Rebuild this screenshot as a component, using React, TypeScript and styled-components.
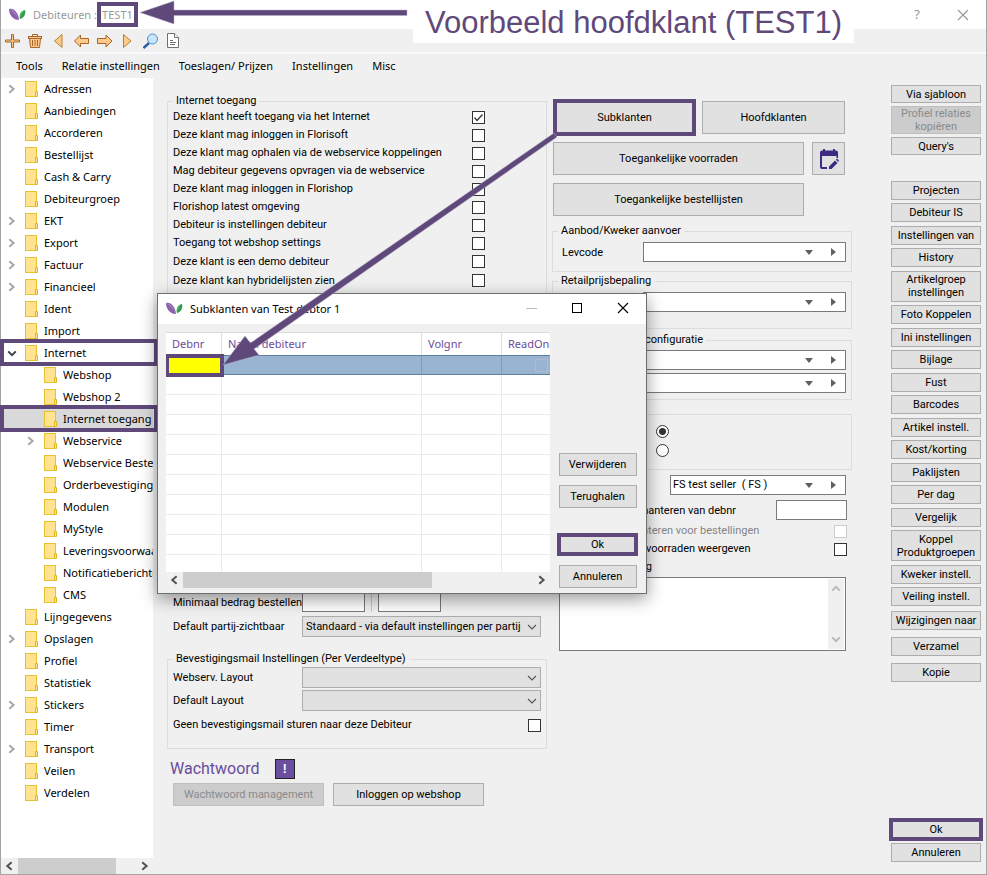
import React from 'react';
import styled, { createGlobalStyle, css } from 'styled-components';

const PURPLE = '#5f497a';
const UI = '"Noto Sans", "Open Sans", sans-serif';
const FORM = 'Roboto, "Liberation Sans", sans-serif';

const GlobalStyle = createGlobalStyle`
  *, *::before, *::after { box-sizing: border-box; }
  body { margin: 0; background: #fff; }
  button, input, select, textarea { font: inherit; color: inherit; margin: 0; }
`;

const Window = styled.div`
  position: relative;
  display: flex;
  flex-direction: column;
  min-height: 100vh;
  background: #f0f0f0;
  border: 1px solid #a3a3a3;
  border-top: 0;
  font: 11px/14px ${FORM};
  color: #000;
`;

const TitleBar = styled.header`
  display: flex;
  align-items: center;
  height: 29px;
  padding-left: 8px;
  background: #fff;
  font: 11px/15px ${UI};
  color: #999;
`;

const TitleText = styled.h1`
  display: flex;
  align-items: center;
  flex: 1;
  margin: 0 0 0 7px;
  font: inherit;
`;

const Marked = styled.span`
  display: grid;
  place-items: center;
  width: 41px;
  height: 25px;
  border: 4px solid ${PURPLE};
`;

const CaptionButton = styled.button<{ $dark?: boolean }>`
  display: grid;
  place-items: center;
  width: 46px;
  height: 28px;
  padding: 0;
  border: 0;
  background: none;
  font-size: 13px;
  color: ${(p) => (p.$dark ? '#000' : '#999')};
`;

const Toolbar = styled.div`
  display: flex;
  height: 25px;
  border-bottom: 2px solid #fafbfd;
`;

const ToolButton = styled.button`
  display: grid;
  place-items: center;
  width: 23px;
  padding: 0;
  border: 0;
  background: none;
`;

const MenuBar = styled.nav`
  display: flex;
  gap: 9px;
  height: 24px;
  padding-left: 10px;
  font: 11px/24px ${UI};
`;

const MenuItem = styled.button`
  padding: 0 5px;
  border: 0;
  background: none;
`;

const Body = styled.div`
  display: flex;
  flex: 1;
`;

const TreePane = styled.aside`
  display: flex;
  flex-direction: column;
  flex: none;
  width: 152px;
  background: #fff;
  font: 11px/22px ${UI};
`;

const TreeList = styled.ul`
  flex: 1;
  margin: 0;
  padding: 0;
  list-style: none;
`;

const TreeRow = styled.li<{ $sub?: boolean; $marked?: boolean; $selected?: boolean }>`
  position: relative;
  display: flex;
  align-items: center;
  height: 22px;
  padding-left: ${(p) => (p.$sub ? 24 : 5)}px;
  background: ${(p) => (p.$selected ? '#d9d9d9' : 'none')};
  ${(p) =>
    p.$marked &&
    css`
      &::after {
        content: '';
        position: absolute;
        inset: -3px -5px -2px -1px;
        border: 4px solid ${PURPLE};
      }
    `}
`;

const Expander = styled.span`
  display: flex;
  flex: none;
  width: 19px;
`;

const TreeLabel = styled.span`
  flex: 1;
  margin-left: 6px;
  overflow: hidden;
  white-space: nowrap;
`;

const ScrollBar = styled.div`
  display: flex;
  flex: none;
  align-items: stretch;
  height: 16px;
  background: #f0f0f0;
`;

const ScrollButton = styled.button`
  display: grid;
  place-items: center;
  flex: none;
  width: 17px;
  padding: 0;
  border: 0;
  background: none;
`;

const ScrollTrack = styled.div`
  flex: 1;
`;

const ScrollThumb = styled.div<{ $share: number }>`
  width: ${(p) => p.$share}%;
  height: 100%;
  background: #cdcdcd;
`;

const Main = styled.main`
  display: flex;
  flex: 1;
  gap: 5px;
  padding: 7px 5px 12px 14px;
`;

const LeftColumn = styled.div`
  flex: 0 1 380px;
  min-width: 0;
  padding-top: 9px;
`;

const RightColumn = styled.div`
  flex: 0 1 300px;
  min-width: 0;
  padding-top: 14px;
`;

const Group = styled.fieldset<{ $height?: number; $top?: number; $after?: number }>`
  min-width: 0;
  min-height: ${(p) => p.$height ?? 0}px;
  margin: 0 0 ${(p) => p.$after ?? 0}px;
  padding: ${(p) => p.$top ?? 0}px 5px 0;
  border: 1px solid #dcdcdc;
`;

const Legend = styled.legend<{ $indent?: number }>`
  margin-left: ${(p) => p.$indent ?? 0}px;
  padding: 0 3px;
`;

const CheckRow = styled.label<{ $height?: number; $start?: number; $end?: number; $disabled?: boolean }>`
  display: flex;
  align-items: center;
  justify-content: space-between;
  height: ${(p) => p.$height ?? 18}px;
  line-height: 16px;
  padding-left: ${(p) => p.$start ?? 0}px;
  padding-right: ${(p) => p.$end ?? 0}px;
  color: ${(p) => (p.$disabled ? '#848484' : 'inherit')};
`;

const CheckBox = styled.input.attrs({ type: 'checkbox' })`
  appearance: none;
  flex: none;
  width: 13px;
  height: 13px;
  border: 1px solid #333;
  background: #fff;
  &:disabled { border-color: #ccc; }
  &:checked {
    background: #fff url("data:image/svg+xml,%3Csvg xmlns='http://www.w3.org/2000/svg' width='11' height='11'%3E%3Cpath d='M1.5 5.5 4 8.5 9.5 2.5' fill='none' stroke='%23333' stroke-width='1.3'/%3E%3C/svg%3E") center no-repeat;
  }
`;

const Radio = styled.input.attrs({ type: 'radio' })`
  appearance: none;
  width: 13px;
  height: 13px;
  border: 1px solid #333;
  border-radius: 50%;
  background: #fff;
  &:checked { background: radial-gradient(circle, #333 3px, #fff 4px); }
`;

const RadioStack = styled.div`
  display: flex;
  flex-direction: column;
  gap: 6px;
  padding: 10px 0 0 98px;
`;

const Field = styled.div<{ $height?: number; $after?: number; $start?: number; $end?: number }>`
  display: flex;
  align-items: center;
  height: ${(p) => p.$height ?? 21}px;
  margin-bottom: ${(p) => p.$after ?? 0}px;
  padding-left: ${(p) => p.$start ?? 0}px;
  padding-right: ${(p) => p.$end ?? 0}px;
`;

const SplitField = styled(Field)`
  justify-content: space-between;
`;

const FieldLabel = styled.label<{ $width: number; $right?: boolean }>`
  flex: none;
  width: ${(p) => p.$width}px;
  padding-top: 1px;
  text-align: ${(p) => (p.$right ? 'right' : 'left')};
  white-space: nowrap;
`;

const TextBox = styled.input<{ $width: number }>`
  width: ${(p) => p.$width}px;
  height: 20px;
  padding: 0 3px;
  border: 1px solid #7a7a7a;
  background: #fff;
`;

const Divider = styled.span`
  width: 1px;
  height: 20px;
  margin: 0 6px;
  background: #c8c8c8;
`;

const DropDown = styled.select`
  appearance: none;
  flex: 1;
  min-width: 0;
  height: 21px;
  padding: 0 16px 0 3px;
  border: 1px solid #adadad;
  border-radius: 0;
  background: #e1e1e1 url("data:image/svg+xml,%3Csvg xmlns='http://www.w3.org/2000/svg' width='10' height='6'%3E%3Cpath d='M1 1 5 5 9 1' fill='none' stroke='%23555' stroke-width='1.1'/%3E%3C/svg%3E") right 3px center no-repeat;
`;

const ComboBox = styled.div`
  display: flex;
  flex: 1;
  height: 20px;
  border: 1px solid #7a7a7a;
  background: #fff;
`;

const ComboSelect = styled.select`
  appearance: none;
  flex: 1;
  min-width: 0;
  padding: 0 20px 0 2px;
  border: 0;
  white-space: pre;
  background: url("data:image/svg+xml,%3Csvg xmlns='http://www.w3.org/2000/svg' width='8' height='5'%3E%3Cpath d='M0 0H8L4 5Z' fill='%23606060'/%3E%3C/svg%3E") right 8px center no-repeat;
`;

const ComboNext = styled.button`
  display: grid;
  place-items: center;
  width: 24px;
  padding: 0;
  border: 0;
  background: none;
`;

const Button = styled.button<{ $width?: number; $height?: number; $marked?: boolean }>`
  display: grid;
  place-items: center;
  flex: none;
  width: ${(p) => (p.$width ? `${p.$width}px` : '100%')};
  height: ${(p) => p.$height ?? 33}px;
  padding: 0;
  border: 1px solid #adadad;
  background: #e1e1e1;
  font: 11px/13px ${FORM};
  color: #000;
  white-space: pre;
  &:disabled { background: #ccc; border-color: #bfbfbf; color: #8a8a8a; }
  ${(p) => p.$marked && css`border: 4px solid ${PURPLE};`}
`;

const ButtonStack = styled.div`
  margin-bottom: 8px;
  padding-left: 1px;
`;

const ButtonRow = styled.div<{ $gap?: number; $indent?: number; $after?: number }>`
  display: flex;
  align-items: center;
  gap: ${(p) => p.$gap ?? 0}px;
  margin-bottom: ${(p) => p.$after ?? 0}px;
  padding-left: ${(p) => p.$indent ?? 0}px;
`;

const Section = styled.h2`
  display: flex;
  align-items: center;
  gap: 15px;
  margin: 10px 0 4px 3px;
  font: 16px/20px ${FORM};
  color: #6a4c9c;
`;

const Alert = styled.span`
  display: grid;
  place-items: center;
  width: 20px;
  height: 20px;
  border: 1px solid #222;
  background: #6b4f9e;
  font: bold 12px/18px "Liberation Sans", sans-serif;
  color: #fff;
`;

const NoteBox = styled.div`
  display: flex;
  height: 74px;
  margin: 2px 6px 0 7px;
  padding: 1px;
  border: 1px solid #7a7a7a;
  background: #fff;
`;

const NoteText = styled.textarea`
  flex: 1;
  min-width: 0;
  padding: 0;
  border: 0;
  resize: none;
`;

const NoteScroll = styled.div`
  display: flex;
  flex-direction: column;
  justify-content: space-between;
  align-items: center;
  width: 16px;
  padding: 4px 0;
  background: #f0f0f0;
`;

const Sidebar = styled.div`
  display: flex;
  flex-direction: column;
  flex: none;
  width: 90px;
  margin-left: auto;
`;

const TopActions = styled.div`
  display: grid;
  gap: 3px;
  margin-bottom: 26px;
`;

const EvenActions = styled.div`
  display: flex;
  flex-direction: column;
  justify-content: space-between;
  min-height: 425px;
  margin-bottom: 5px;
`;

const WideActions = styled.div`
  display: grid;
  gap: 7px;
`;

const CloseActions = styled.div`
  display: grid;
  justify-items: center;
  gap: 2px;
  margin: auto -2px 0;
`;

const Dialog = styled.section`
  position: absolute;
  left: 156px;
  top: 293px;
  width: 490px;
  border: 1px solid #6e6e6e;
  background: #f0f0f0;
  box-shadow: 0 5px 16px rgba(0, 0, 0, 0.4);
`;

const DialogBar = styled.header`
  display: flex;
  align-items: center;
  height: 30px;
  padding: 0 0 2px 8px;
  background: #fff;
  font: 11px/15px ${UI};
`;

const DialogTitle = styled.h2`
  flex: 1;
  margin: 0 0 0 7px;
  font: inherit;
`;

const DialogBody = styled.div`
  display: flex;
  gap: 8px;
  padding: 8px 9px 5px 8px;
`;

const GridPane = styled.div`
  flex: 1;
  min-width: 0;
`;

const GridClip = styled.div`
  height: 240px;
  overflow: hidden;
`;

const Grid = styled.table`
  width: 405px;
  table-layout: fixed;
  border-collapse: separate;
  border-spacing: 0;
  background: #fff;
  font: 11px/15px ${UI};
`;

const HeadCell = styled.th<{ $width: number }>`
  width: ${(p) => p.$width}px;
  height: 23px;
  padding: 0 6px 1px;
  border-top: 1px solid #dcdcdc;
  border-right: 1px solid #dcdcdc;
  text-align: left;
  font-weight: normal;
  color: #6a4c9c;
  white-space: nowrap;
`;

const Cell = styled.td<{ $active?: boolean; $marked?: boolean }>`
  height: 20px;
  padding: 0;
  border-right: 1px solid ${(p) => (p.$active ? '#7f9ebf' : '#ebebeb')};
  border-bottom: 1px solid ${(p) => (p.$active ? '#5f7f9f' : '#ebebeb')};
  ${(p) => p.$active && css`background: #99b4d1; border-top: 1px solid #5f7f9f;`}
  ${(p) =>
    p.$marked &&
    css`
      position: relative;
      background: #ff0;
      &::after {
        content: '';
        position: absolute;
        inset: -2px -3px -3px -1px;
        border: 4px solid ${PURPLE};
      }
    `}
`;

const GhostCheck = styled.input.attrs({ type: 'checkbox' })`
  appearance: none;
  display: block;
  width: 13px;
  height: 13px;
  margin-left: 33px;
  border: 1px solid #b5bcc8;
`;

const DialogActions = styled.div`
  display: flex;
  flex-direction: column;
  align-items: center;
  justify-content: flex-end;
  gap: 9px;
  width: 79px;
`;

const Spacer = styled.div`
  height: 7px;
`;

const Banner = styled.p`
  position: absolute;
  left: 412px;
  top: 0;
  width: 441px;
  height: 43px;
  margin: 0;
  background: #fff;
  text-align: center;
  font: 31px/45px "Liberation Sans", sans-serif;
  color: ${PURPLE};
  white-space: nowrap;
`;

const Annotations = styled.svg`
  position: absolute;
  left: -1px;
  top: 0;
  pointer-events: none;
`;

const Logo = () => (
  <svg width="17" height="13" viewBox="0 0 17 13">
    <path d="M0 1C5 0 9 4 10 12C4 12 0 7 0 1Z" fill="#8a62ac" />
    <path d="M0 1C4 3 8 7 10 12C7 5 4 2 0 1Z" fill="#c6a5d6" />
    <path d="M16 2C12 3 10 6 11 11C15 10 17 6 16 2Z" fill="#2e9b4e" />
    <path d="M16 2C13 5 12 7 11 11C10 6 12 3 16 2Z" fill="#59b567" />
  </svg>
);

const Folder = () => (
  <svg width="13" height="16" viewBox="0 0 13 16">
    <rect x="0.5" y="0.5" width="11" height="15" fill="#ffe391" stroke="#e8c22e" />
    <path d="M10.5 15.5V10.5H12.5V15.5Z" fill="#ffe391" stroke="#e0b722" />
  </svg>
);

type Dir = 'left' | 'right' | 'up' | 'down';
const CHEVRONS: Record<Dir, string> = {
  left: 'M7 2 3 5.5 7 9',
  right: 'M3 2 7 5.5 3 9',
  up: 'M2 7 5.5 3.5 9 7',
  down: 'M2 4 5.5 7.5 9 4',
};
const Chevron = ({ dir, color }: { dir: Dir; color: string }) => (
  <svg width="12" height="12" viewBox="0 0 11 11">
    <path d={CHEVRONS[dir]} fill="none" stroke={color} strokeWidth="1.8" />
  </svg>
);

const CloseIcon = () => (
  <svg width="12" height="12" viewBox="0 0 12 12">
    <path d="M1 1 11 11M11 1 1 11" stroke="currentColor" strokeWidth="1.1" />
  </svg>
);

const ORANGE = { fill: '#ffc98c', stroke: '#a8662a', strokeWidth: 1 };
const TOOLS: [string, React.ReactNode][] = [
  ['Nieuw', <path d="M6.5 1.5H8.5V7H14.5V9H8.5V14.5H6.5V9H0.5V7H6.5Z" {...ORANGE} />],
  ['Verwijder', (
    <g {...ORANGE}>
      <path d="M1.5 5.5H12.5L11.5 14.5H2.5Z" />
      <rect x="0.5" y="3.5" width="13" height="2" />
      <path d="M4.5 3.5V1.5H9.5V3.5" fill="none" />
      <path d="M4.5 7V13M7 7V13M9.5 7V13" />
    </g>
  )],
  ['Eerste', <path d="M11 1.5V14.5L3.5 8Z" {...ORANGE} stroke="#b0852f" />],
  ['Vorige', <path d="M0.5 8 6.5 2V5.5H14.5V10.5H6.5V14Z" {...ORANGE} />],
  ['Volgende', <path d="M15 8 9 2V5.5H0.5V10.5H9V14Z" {...ORANGE} />],
  ['Laatste', <path d="M3.5 1.5V14.5L11 8Z" {...ORANGE} stroke="#b0852f" />],
  ['Zoeken', (
    <g>
      <path d="M6 10 0.5 15" stroke="#2b5faa" strokeWidth="2.5" />
      <circle cx="9.5" cy="6" r="5" fill="#c8e6fb" stroke="#4a8ccb" />
    </g>
  )],
  ['Document', (
    <g fill="#fff" stroke="#707070">
      <path d="M1.5 0.5H8.5L12.5 4.5V14.5H1.5Z" />
      <path d="M8.5 0.5V4.5H12.5" />
      <path d="M4 7.5H7M4 9.5H10M4 11.5H9" />
    </g>
  )],
];

type Node = { name: string; open?: boolean; more?: boolean; sub?: boolean; marked?: boolean; selected?: boolean };
const NODES: Node[] = [
  { name: 'Adressen', more: true },
  { name: 'Aanbiedingen' },
  { name: 'Accorderen' },
  { name: 'Bestellijst' },
  { name: 'Cash & Carry' },
  { name: 'Debiteurgroep' },
  { name: 'EKT', more: true },
  { name: 'Export', more: true },
  { name: 'Factuur', more: true },
  { name: 'Financieel', more: true },
  { name: 'Ident' },
  { name: 'Import' },
  { name: 'Internet', open: true, marked: true },
  { name: 'Webshop', sub: true },
  { name: 'Webshop 2', sub: true },
  { name: 'Internet toegang', sub: true, marked: true, selected: true },
  { name: 'Webservice', sub: true, more: true },
  { name: 'Webservice Bestellen', sub: true },
  { name: 'Orderbevestiging', sub: true },
  { name: 'Modulen', sub: true },
  { name: 'MyStyle', sub: true },
  { name: 'Leveringsvoorwaarden', sub: true },
  { name: 'Notificatieberichten', sub: true },
  { name: 'CMS', sub: true },
  { name: 'Lijngegevens' },
  { name: 'Opslagen', more: true },
  { name: 'Profiel' },
  { name: 'Statistiek' },
  { name: 'Stickers', more: true },
  { name: 'Timer' },
  { name: 'Transport', more: true },
  { name: 'Veilen' },
  { name: 'Verdelen' },
];

const ACCESS = [
  'Deze klant heeft toegang via het Internet',
  'Deze klant mag inloggen in Florisoft',
  'Deze klant mag ophalen via de webservice koppelingen',
  'Mag debiteur gegevens opvragen via de webservice',
  'Deze klant mag inloggen in Florishop',
  'Florishop latest omgeving',
  'Debiteur is instellingen debiteur',
  'Toegang tot webshop settings',
  'Deze klant is een demo debiteur',
  'Deze klant kan hybridelijsten zien',
];

const ACTIONS = [
  'Projecten', 'Debiteur IS', 'Instellingen van', 'History', 'Artikelgroep\ninstellingen',
  'Foto Koppelen', 'Ini instellingen', 'Bijlage', 'Fust', 'Barcodes', 'Artikel instell.',
  'Kost/korting', 'Paklijsten', 'Per dag', 'Vergelijk', 'Koppel\nProduktgroepen',
  'Kweker instell.', 'Veiling instell.',
];

const Combo = ({ name, value = '', id }: { name: string; value?: string; id?: string }) => (
  <ComboBox>
    <ComboSelect aria-label={name} id={id}>
      <option>{value}</option>
    </ComboSelect>
    <ComboNext aria-label={`${name} openen`}>
      <svg width="5" height="8" viewBox="0 0 5 8"><path d="M0 0V8L5 4Z" fill="#606060" /></svg>
    </ComboNext>
  </ComboBox>
);

const HScroll = ({ share }: { share: number }) => (
  <ScrollBar>
    <ScrollButton aria-label="Naar links"><Chevron dir="left" color="#505050" /></ScrollButton>
    <ScrollTrack><ScrollThumb $share={share} /></ScrollTrack>
    <ScrollButton aria-label="Naar rechts"><Chevron dir="right" color="#505050" /></ScrollButton>
  </ScrollBar>
);

const Tree = () => (
  <TreePane>
    <TreeList>
      {NODES.map((n) => (
        <TreeRow key={n.name} $sub={n.sub} $marked={n.marked} $selected={n.selected}>
          <Expander>
            {n.more && <Chevron dir="right" color="#a6a6a6" />}
            {n.open && <Chevron dir="down" color="#404040" />}
          </Expander>
          <Folder />
          <TreeLabel>{n.name}</TreeLabel>
        </TreeRow>
      ))}
    </TreeList>
    <HScroll share={83} />
  </TreePane>
);

const LeftForm = () => (
  <LeftColumn>
    <Group $height={482} $after={15}>
      <Legend>Internet toegang</Legend>
      {ACCESS.map((text, i) => (
        <CheckRow key={text} $height={i < 8 ? 18 : 19} $end={56}>
          {text}
          <CheckBox defaultChecked={i === 0} />
        </CheckRow>
      ))}
    </Group>
    <Field $height={22} $start={6} $after={3}>
      <FieldLabel $width={129} htmlFor="minimum">Minimaal bedrag bestellen</FieldLabel>
      <TextBox id="minimum" $width={63} />
      <Divider />
      <TextBox aria-label="Bedrag" $width={63} />
    </Field>
    <Field $start={6} $end={6} $after={15}>
      <FieldLabel $width={129} htmlFor="visible">Default partij-zichtbaar</FieldLabel>
      <DropDown id="visible"><option>Standaard - via default instellingen per partij</option></DropDown>
    </Field>
    <Group $height={97} $top={1}>
      <Legend>Bevestigingsmail Instellingen (Per Verdeeltype)</Legend>
      <Field $after={2}>
        <FieldLabel $width={129} htmlFor="weblayout">Webserv. Layout</FieldLabel>
        <DropDown id="weblayout"><option /></DropDown>
      </Field>
      <Field $after={5}>
        <FieldLabel $width={129} htmlFor="deflayout">Default Layout</FieldLabel>
        <DropDown id="deflayout"><option /></DropDown>
      </Field>
      <CheckRow>
        Geen bevestigingsmail sturen naar deze Debiteur
        <CheckBox />
      </CheckRow>
    </Group>
    <Section>Wachtwoord <Alert>!</Alert></Section>
    <ButtonRow $gap={9} $indent={6}>
      <Button $width={151} $height={23} disabled>Wachtwoord management</Button>
      <Button $width={151} $height={23}>Inloggen op webshop</Button>
    </ButtonRow>
  </LeftColumn>
);

const RightForm = () => (
  <RightColumn>
    <ButtonStack>
      <ButtonRow $gap={6} $after={6}>
        <Button $width={143} $height={37} $marked>Subklanten</Button>
        <Button $width={143}>Hoofdklanten</Button>
      </ButtonRow>
      <ButtonRow $gap={8} $after={8}>
        <Button $width={251}>Toegankelijke voorraden</Button>
        <Button $width={33} aria-label="Agenda">
          <svg width="20" height="22" viewBox="0 0 20 22">
            <path d="M3 2.5H17Q19 2.5 19 4.5V8H3V19H8V21H3Q1 21 1 19V4.5Q1 2.5 3 2.5Z" fill="#3f2a82" />
            <path d="M4 1H6V4H4ZM14 1H16V4H14ZM17.5 8H19V10H17.5Z" fill="#3f2a82" />
            <path d="M10 21V18.5L16 12.5 18.5 15 12.5 21ZM17 11.5 18 10.5 20 12.5 19 14Z" fill="#3f2a82" />
          </svg>
        </Button>
      </ButtonRow>
      <Button $width={251}>Toegankelijke bestellijsten</Button>
    </ButtonStack>
    <Group $height={48} $top={4} $after={2}>
      <Legend>Aanbod/Kweker aanvoer</Legend>
      <Field $height={20} $start={4}>
        <FieldLabel $width={81} htmlFor="levcode">Levcode</FieldLabel>
        <Combo name="Levcode" id="levcode" />
      </Field>
    </Group>
    <Group $height={55} $top={4} $after={4}>
      <Legend>Retailprijsbepaling</Legend>
      <Field $height={20} $start={85}><Combo name="Retailprijsbepaling" /></Field>
    </Group>
    <Group $height={67} $top={3} $after={14}>
      <Legend $indent={84}>configuratie</Legend>
      <Field $height={20} $start={85} $after={3}><Combo name="Configuratie" /></Field>
      <Field $height={20} $start={85}><Combo name="Configuratie" /></Field>
    </Group>
    <Group $height={56} $after={5}>
      <RadioStack>
        <Radio name="mode" aria-label="Aan" defaultChecked />
        <Radio name="mode" aria-label="Uit" />
      </RadioStack>
    </Group>
    <Field $height={20} $start={118} $end={6} $after={5}>
      <Combo name="Verkoper" value={'FS test seller \u00a0( FS )'} />
    </Field>
    <SplitField $height={20} $end={5} $after={2}>
      <FieldLabel $width={184} $right htmlFor="debnr">hanteren van debnr</FieldLabel>
      <TextBox id="debnr" $width={71} />
    </SplitField>
    <CheckRow $start={78} $end={5} $disabled>
      hanteren voor bestellingen
      <CheckBox disabled />
    </CheckRow>
    <CheckRow $start={94} $end={5}>
      voorraden weergeven
      <CheckBox />
    </CheckRow>
    <Field $height={17} $after={1}>
      <FieldLabel $width={100} $right htmlFor="note">Omschrijving</FieldLabel>
    </Field>
    <NoteBox>
      <NoteText id="note" />
      <NoteScroll>
        <Chevron dir="up" color="#b8b8b8" />
        <Chevron dir="down" color="#b8b8b8" />
      </NoteScroll>
    </NoteBox>
  </RightColumn>
);

const Actions = () => (
  <Sidebar>
    <TopActions>
      <Button $height={18}>Via sjabloon</Button>
      <Button $height={28} disabled>{'Profiel relaties\nkopiëren'}</Button>
      <Button $height={18}>Query's</Button>
    </TopActions>
    <EvenActions>
      {ACTIONS.map((a) => (
        <Button key={a} $height={a.includes('\n') ? 31 : 19}>{a}</Button>
      ))}
    </EvenActions>
    <WideActions>
      <Button $height={19}>Wijzigingen naar</Button>
      <Button $height={19}>Verzamel</Button>
      <Button $height={19}>Kopie</Button>
    </WideActions>
    <CloseActions>
      <Button $height={23} $marked>Ok</Button>
      <Button $width={90} $height={19}>Annuleren</Button>
    </CloseActions>
  </Sidebar>
);

const SubDialog = () => (
  <Dialog role="dialog" aria-labelledby="dialog-title">
    <DialogBar>
      <Logo />
      <DialogTitle id="dialog-title">Subklanten van Test debtor 1</DialogTitle>
      <CaptionButton aria-label="Minimaliseren" disabled>
        <svg width="11" height="12"><path d="M0 6.5H11" stroke="#bbb" /></svg>
      </CaptionButton>
      <CaptionButton $dark aria-label="Maximaliseren">
        <svg width="10" height="10"><rect x="0.5" y="0.5" width="9" height="9" fill="none" stroke="#000" /></svg>
      </CaptionButton>
      <CaptionButton $dark aria-label="Sluiten"><CloseIcon /></CaptionButton>
    </DialogBar>
    <DialogBody>
      <GridPane>
        <GridClip>
          <Grid>
            <thead>
              <tr>
                <HeadCell $width={56}>Debnr</HeadCell>
                <HeadCell $width={200}>Naam debiteur</HeadCell>
                <HeadCell $width={80}>Volgnr</HeadCell>
                <HeadCell $width={69}>ReadOnly</HeadCell>
              </tr>
            </thead>
            <tbody>
              <tr>
                <Cell $active $marked />
                <Cell $active />
                <Cell $active />
                <Cell $active><GhostCheck aria-label="ReadOnly" /></Cell>
              </tr>
              {Array.from({ length: 10 }, (_, i) => (
                <tr key={i}><Cell /><Cell /><Cell /><Cell /></tr>
              ))}
            </tbody>
          </Grid>
        </GridClip>
        <HScroll share={71} />
      </GridPane>
      <DialogActions>
        <Button $width={78} $height={23}>Verwijderen</Button>
        <Button $width={78} $height={23}>Terughalen</Button>
        <Spacer />
        <Button $width={81} $height={23} $marked>Ok</Button>
        <Button $width={78} $height={23}>Annuleren</Button>
      </DialogActions>
    </DialogBody>
  </Dialog>
);

export default function App() {
  return (
    <>
      <GlobalStyle />
      <Window>
        <TitleBar>
          <Logo />
          <TitleText>Debiteuren :<Marked>TEST1</Marked></TitleText>
          <CaptionButton aria-label="Help">?</CaptionButton>
          <CaptionButton aria-label="Sluiten"><CloseIcon /></CaptionButton>
        </TitleBar>
        <Toolbar>
          {TOOLS.map(([name, icon]) => (
            <ToolButton key={name} aria-label={name}>
              <svg width="16" height="16" viewBox="0 0 16 16">{icon}</svg>
            </ToolButton>
          ))}
        </Toolbar>
        <MenuBar>
          {['Tools', 'Relatie instellingen', 'Toeslagen/ Prijzen', 'Instellingen', 'Misc'].map((m) => (
            <MenuItem key={m}>{m}</MenuItem>
          ))}
        </MenuBar>
        <Body>
          <Tree />
          <Main>
            <LeftForm />
            <RightForm />
            <Actions />
          </Main>
        </Body>
        <SubDialog />
        <Banner>Voorbeeld hoofdklant (TEST1)</Banner>
        <Annotations width="600" height="400" viewBox="0 0 600 400">
          <g fill={PURPLE} stroke="#b9adc6" strokeWidth="0.5">
            <path d="M140 12.5 174 1V10H407V15.5H174V24Z" />
            <path d="M223 365 245 336 250.5 343 554 133 557 137 254 349 259 355Z" />
          </g>
        </Annotations>
      </Window>
    </>
  );
}
